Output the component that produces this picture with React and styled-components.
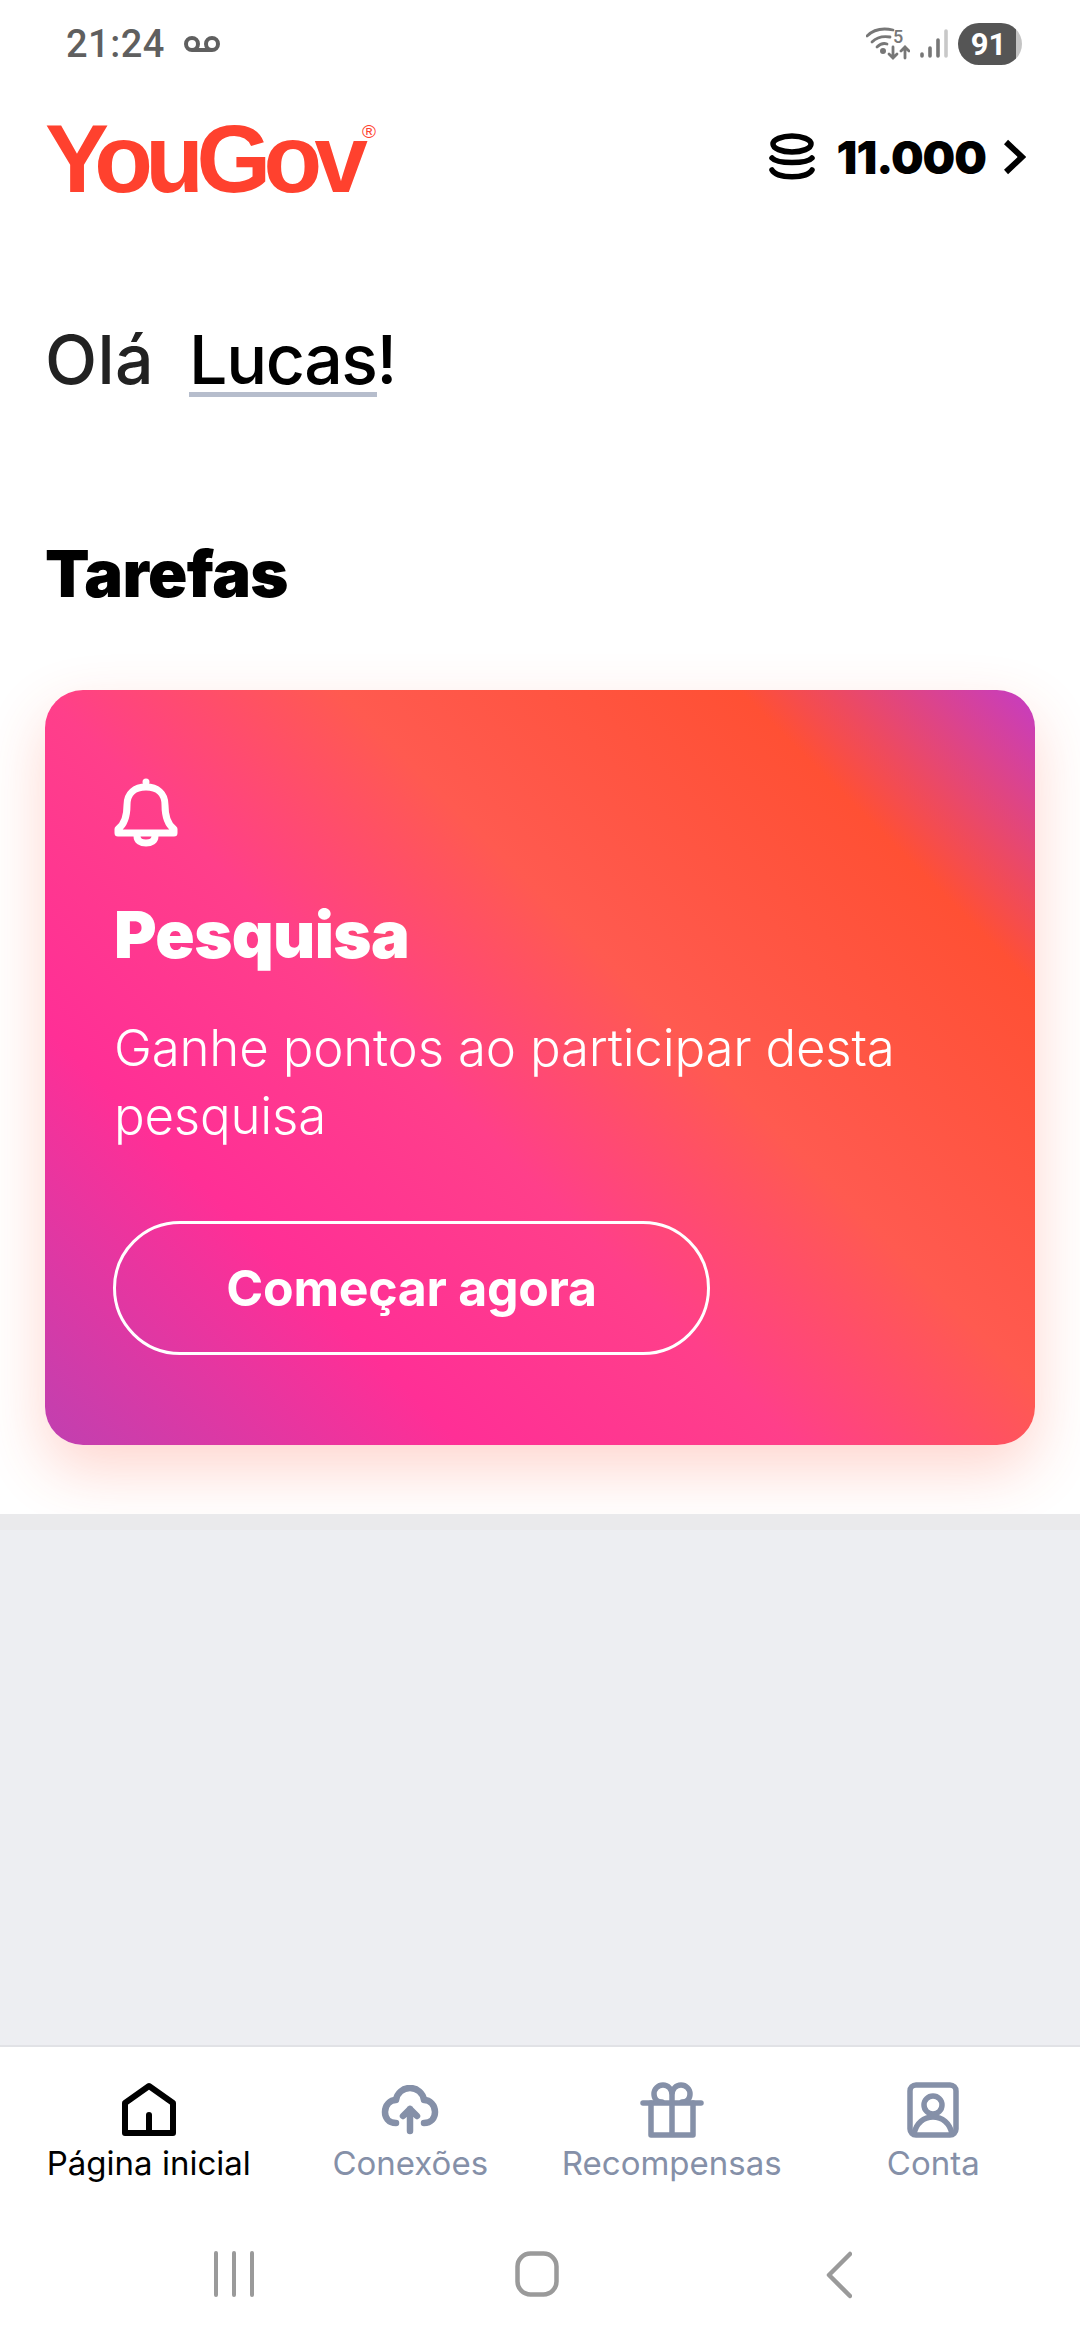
import React from "react";
import styled, { createGlobalStyle } from "styled-components";

const GlobalStyle = createGlobalStyle`
    html, body {
        margin: 0;
        padding: 0;
        background: #fff;
    }
    * {
        box-sizing: border-box;
    }
`

const Page = styled.div`
    width: 1080px;
    height: 2340px;
    display: flex;
    flex-direction: column;
    font-family: Inter, "Noto Sans", sans-serif;
    overflow: hidden;
`

const Top = styled.div`
    height: 1514px;
    background: #fff;
    padding: 0 45px;
`

const StatusBar = styled.div`
    height: 114px;
    padding: 21px 13px 0 21px;
    display: flex;
    align-items: flex-start;
    justify-content: space-between;
    color: #5f5f5f;
`

const StatusLeft = styled.div`
    display: flex;
    align-items: center;
    gap: 19px;
    height: 46px;
`

const Clock = styled.span`
    font-family: Roboto, sans-serif;
    font-weight: 500;
    font-size: 38px;
    letter-spacing: 0.5px;
`

const StatusRight = styled.div`
    display: flex;
    align-items: center;
    gap: 10px;
    height: 46px;
`

const Battery = styled.div`
    width: 64px;
    height: 42px;
    border-radius: 21px;
    background: linear-gradient(to right, #555 0, #555 90%, #c4c4c4 90%);
    color: #fff;
    font-family: Roboto, sans-serif;
    font-weight: 700;
    font-size: 31px;
    display: flex;
    align-items: center;
    justify-content: center;
    padding-right: 3px;
`

const Header = styled.div`
    display: flex;
    align-items: center;
    justify-content: space-between;
    height: 90px;
    padding-right: 9px;
`

const Logo = styled.div`
    position: relative;
    font-family: "Liberation Sans", Arial, sans-serif;
    font-weight: 700;
    font-size: 96px;
    line-height: 90px;
    letter-spacing: -7.6px;
    color: #ff412e;
    width: 310px;
`

const LogoMark = styled.span`
    position: absolute;
    left: 317px;
    top: 9px;
    font-family: "Liberation Sans", Arial, sans-serif;
    font-weight: 400;
    font-size: 19px;
    line-height: 18px;
    letter-spacing: 0;
`

const Points = styled.div`
    display: flex;
    align-items: center;
    color: #000;
    margin-bottom: 5px;
`

const PointsValue = styled.span`
    font-weight: 900;
    font-size: 46px;
    letter-spacing: -1px;
    margin: 0 18px 0 22px;
`

const Greeting = styled.div`
    margin-top: 115px;
    font-size: 68px;
    line-height: 80px;
    color: #222;
    display: flex;
    gap: 35px;
`

const Hello = styled.span`
    font-weight: 500;
    letter-spacing: 0.4px;
`

const Name = styled.span`
    color: #000;
    font-weight: 500;
    letter-spacing: -1.4px;
`

const Underlined = styled.span`
    border-bottom: 5px solid #b6bdcc;
    display: inline-block;
    height: 78px;
`

const SectionTitle = styled.h2`
    margin: 137px 0 0;
    font-size: 65px;
    line-height: 76px;
    font-weight: 900;
    letter-spacing: -0.6px;
    color: #000;
`

const Card = styled.div`
    margin-top: 78px;
    height: 755px;
    border-radius: 38px;
    padding: 88px 69px 0;
    color: #fff;
    background: linear-gradient(45deg, #c040b0 0%, #ff2f96 24%, #ff3f8a 43%, #ff5a50 60%, #ff5034 83%, #c53cc4 100%);
    box-shadow: 0 24px 60px rgba(255, 80, 50, 0.24);
`

const CardTitle = styled.h3`
    margin: 43px 0 0;
    font-size: 65px;
    line-height: 80px;
    font-weight: 900;
    letter-spacing: -0.6px;
`

const CardText = styled.p`
    margin: 39px 0 0;
    font-size: 51px;
    line-height: 68px;
    font-weight: 300;
    letter-spacing: -0.2px;
`

const StartButton = styled.button`
    display: block;
    margin: 71px 0 0 -1px;
    width: 597px;
    height: 134px;
    border: 3px solid #fff;
    border-radius: 67px;
    background: transparent;
    color: #fff;
    font-family: inherit;
    font-size: 50px;
    font-weight: 700;
    letter-spacing: -0.3px;
`

const GrayArea = styled.div`
    flex: 1;
    background: #edeef2;
    border-top: 16px solid #eaeaec;
    border-bottom: 2px solid #e1e2e6;
`

const TabBar = styled.nav`
    height: 165px;
    background: #fff;
    padding: 34px 18px 0 18px;
    display: grid;
    grid-template-columns: repeat(4, 261.5px);
`

const Tab = styled.div`
    display: flex;
    flex-direction: column;
    align-items: center;
    color: ${props => props.active ? "#000" : "#8590a8"};
`

const TabIcon = styled.div`
    height: 58px;
    display: flex;
    align-items: center;
    justify-content: center;
`

const TabLabel = styled.span`
    margin-top: 3px;
    font-size: 33px;
    line-height: 42px;
`

const SystemNav = styled.div`
    height: 128px;
    background: #fff;
    display: grid;
    grid-template-columns: 214px 40px 261px 60px 251px 24px;
    padding-top: 39px;
    color: #9a9a9a;
`

const NavSlot = styled.div`
    grid-column: ${props => props.column};
`

const HomeIcon = () => (
    <svg width="54" height="56" viewBox="0 0 54 56" fill="none" stroke="currentColor" strokeWidth="6" strokeLinejoin="round" strokeLinecap="round">
        <path d="M27 4 L51 21 V51 H3 V21 Z" />
        <path d="M27 33 V50" />
    </svg>
)

const CloudIcon = () => (
    <svg width="58" height="50" viewBox="0 0 58 50" fill="none" stroke="currentColor" strokeWidth="6.5" strokeLinecap="round" strokeLinejoin="round">
        <path d="M15 38 C7 38 4 32 4 27 C4 20 9 15 15 15 C16 8 22 3 29 3 C36 3 42 8 43 15 C49 15 54 20 54 27 C54 33 50 38 43 38" />
        <path d="M29 46 V24 M22 31 L29 24 L36 31" />
    </svg>
)

const GiftIcon = () => (
    <svg width="64" height="56" viewBox="0 0 64 56" fill="none" stroke="currentColor" strokeWidth="5.5" strokeLinecap="round" strokeLinejoin="round">
        <path d="M3 21 H61" />
        <path d="M11 21 V53 H53 V21 M32 21 V53" />
        <path d="M32 20 V13 C32 7 28 3 23 3 C18 3 14 7 14 12 C14 17 17 20 22 20 M32 13 C32 7 36 3 41 3 C46 3 50 7 50 12 C50 17 47 20 42 20" />
    </svg>
)

const AccountIcon = () => (
    <svg width="52" height="56" viewBox="0 0 52 56" fill="none" stroke="currentColor" strokeWidth="5.5" strokeLinecap="round" strokeLinejoin="round">
        <rect x="3" y="3" width="46" height="50" rx="6" />
        <circle cx="26" cy="23" r="9" />
        <path d="M7 52 C9 41 17 35 26 35 C35 35 43 41 45 52" />
    </svg>
)

const CoinsIcon = () => (
    <svg width="46" height="48" viewBox="0 0 46 48" fill="none" stroke="#000" strokeWidth="5.5" strokeLinecap="round">
        <ellipse cx="23" cy="11" rx="19" ry="8" />
        <path d="M3 25 C8 31 38 31 43 25" />
        <path d="M3 37 C8 46 38 46 43 37" />
    </svg>
)

const ChevronIcon = () => (
    <svg width="22" height="36" viewBox="0 0 22 36" fill="none" stroke="#000" strokeWidth="6">
        <path d="M2 3 L18 18 L2 33" />
    </svg>
)

const BellIcon = () => (
    <svg width="64" height="70" viewBox="0 0 64 70" fill="none" stroke="#fff" strokeWidth="7" strokeLinejoin="round" strokeLinecap="round">
        <circle cx="32" cy="4" r="2" fill="#fff" strokeWidth="3" />
        <path d="M32 9 C21 9 13 15 13 27 C13 38 11 46 4 51 L4 55 H60 L60 51 C53 46 51 38 51 27 C51 15 43 9 32 9 Z" />
        <path d="M23 58 C23 63 27 65 32 65 C37 65 41 63 41 58" />
    </svg>
)

const VoicemailIcon = () => (
    <svg width="36" height="18" viewBox="0 0 36 18" fill="none" stroke="#5f5f5f" strokeWidth="4">
        <circle cx="8" cy="9" r="6" />
        <circle cx="28" cy="9" r="6" />
        <path d="M8 15 H28" />
    </svg>
)

const WifiIcon = () => (
    <svg width="44" height="34" viewBox="0 0 44 34" fill="none" stroke="#777" strokeWidth="2.8" strokeLinecap="round">
        <path d="M1 9 C8 2 18 1 27 3" />
        <path d="M6 15 C11 10 18 9 24 10" />
        <path d="M11 20 C14 17 18 16 21 17" />
        <circle cx="17" cy="24" r="1.6" fill="#777" />
        <text x="27" y="16" fontFamily="Roboto, sans-serif" fontWeight="500" fontSize="18" fill="#777" stroke="none">5</text>
        <path d="M27 20 V31 M23 27 L27 31 L31 27" />
        <path d="M39 31 V20 M35 24 L39 20 L43 24" />
    </svg>
)

const SignalIcon = () => (
    <svg width="28" height="30" viewBox="0 0 28 30" fill="none" strokeWidth="3.6" strokeLinecap="round">
        <path d="M2 27 V25 M10 27 V19 M18 27 V11" stroke="#777" />
        <path d="M26 27 V2" stroke="#c8c8c8" />
    </svg>
)

const RecentsIcon = () => (
    <svg width="40" height="46" viewBox="0 0 40 46" fill="none" stroke="currentColor" strokeWidth="4" strokeLinecap="round">
        <path d="M2 2 V44 M20 2 V44 M38 2 V44" />
    </svg>
)

const SquareIcon = () => (
    <svg width="44" height="46" viewBox="0 0 44 46" fill="none" stroke="currentColor" strokeWidth="4.5">
        <rect x="2.5" y="2.5" width="39" height="41" rx="13" />
    </svg>
)

const BackIcon = () => (
    <svg width="26" height="48" viewBox="0 0 26 48" fill="none" stroke="currentColor" strokeWidth="4.5" strokeLinecap="round" strokeLinejoin="round">
        <path d="M24 3 L3 24 L24 45" />
    </svg>
)

const tabs = [
    { label: "Página inicial", icon: <HomeIcon />, active: true },
    { label: "Conexões", icon: <CloudIcon /> },
    { label: "Recompensas", icon: <GiftIcon /> },
    { label: "Conta", icon: <AccountIcon /> },
]

const App = () => {
    return (
        <Page>
            <GlobalStyle />
            <Top>
                <StatusBar>
                    <StatusLeft>
                        <Clock>21:24</Clock>
                        <VoicemailIcon />
                    </StatusLeft>
                    <StatusRight>
                        <WifiIcon />
                        <SignalIcon />
                        <Battery>91</Battery>
                    </StatusRight>
                </StatusBar>
                <Header>
                    <Logo>YouGov<LogoMark>®</LogoMark></Logo>
                    <Points>
                        <CoinsIcon />
                        <PointsValue>11.000</PointsValue>
                        <ChevronIcon />
                    </Points>
                </Header>
                <Greeting>
                    <Hello>Olá</Hello>
                    <Name><Underlined>Lucas</Underlined>!</Name>
                </Greeting>
                <SectionTitle>Tarefas</SectionTitle>
                <Card>
                    <BellIcon />
                    <CardTitle>Pesquisa</CardTitle>
                    <CardText>Ganhe pontos ao participar desta pesquisa</CardText>
                    <StartButton>Começar agora</StartButton>
                </Card>
            </Top>
            <GrayArea />
            <TabBar>
                {tabs.map((tab) => (
                    <Tab key={tab.label} active={tab.active}>
                        <TabIcon>{tab.icon}</TabIcon>
                        <TabLabel>{tab.label}</TabLabel>
                    </Tab>
                ))}
            </TabBar>
            <SystemNav>
                <NavSlot column={2}><RecentsIcon /></NavSlot>
                <NavSlot column={4}><SquareIcon /></NavSlot>
                <NavSlot column={6}><BackIcon /></NavSlot>
            </SystemNav>
        </Page>
    )
}

export default App
